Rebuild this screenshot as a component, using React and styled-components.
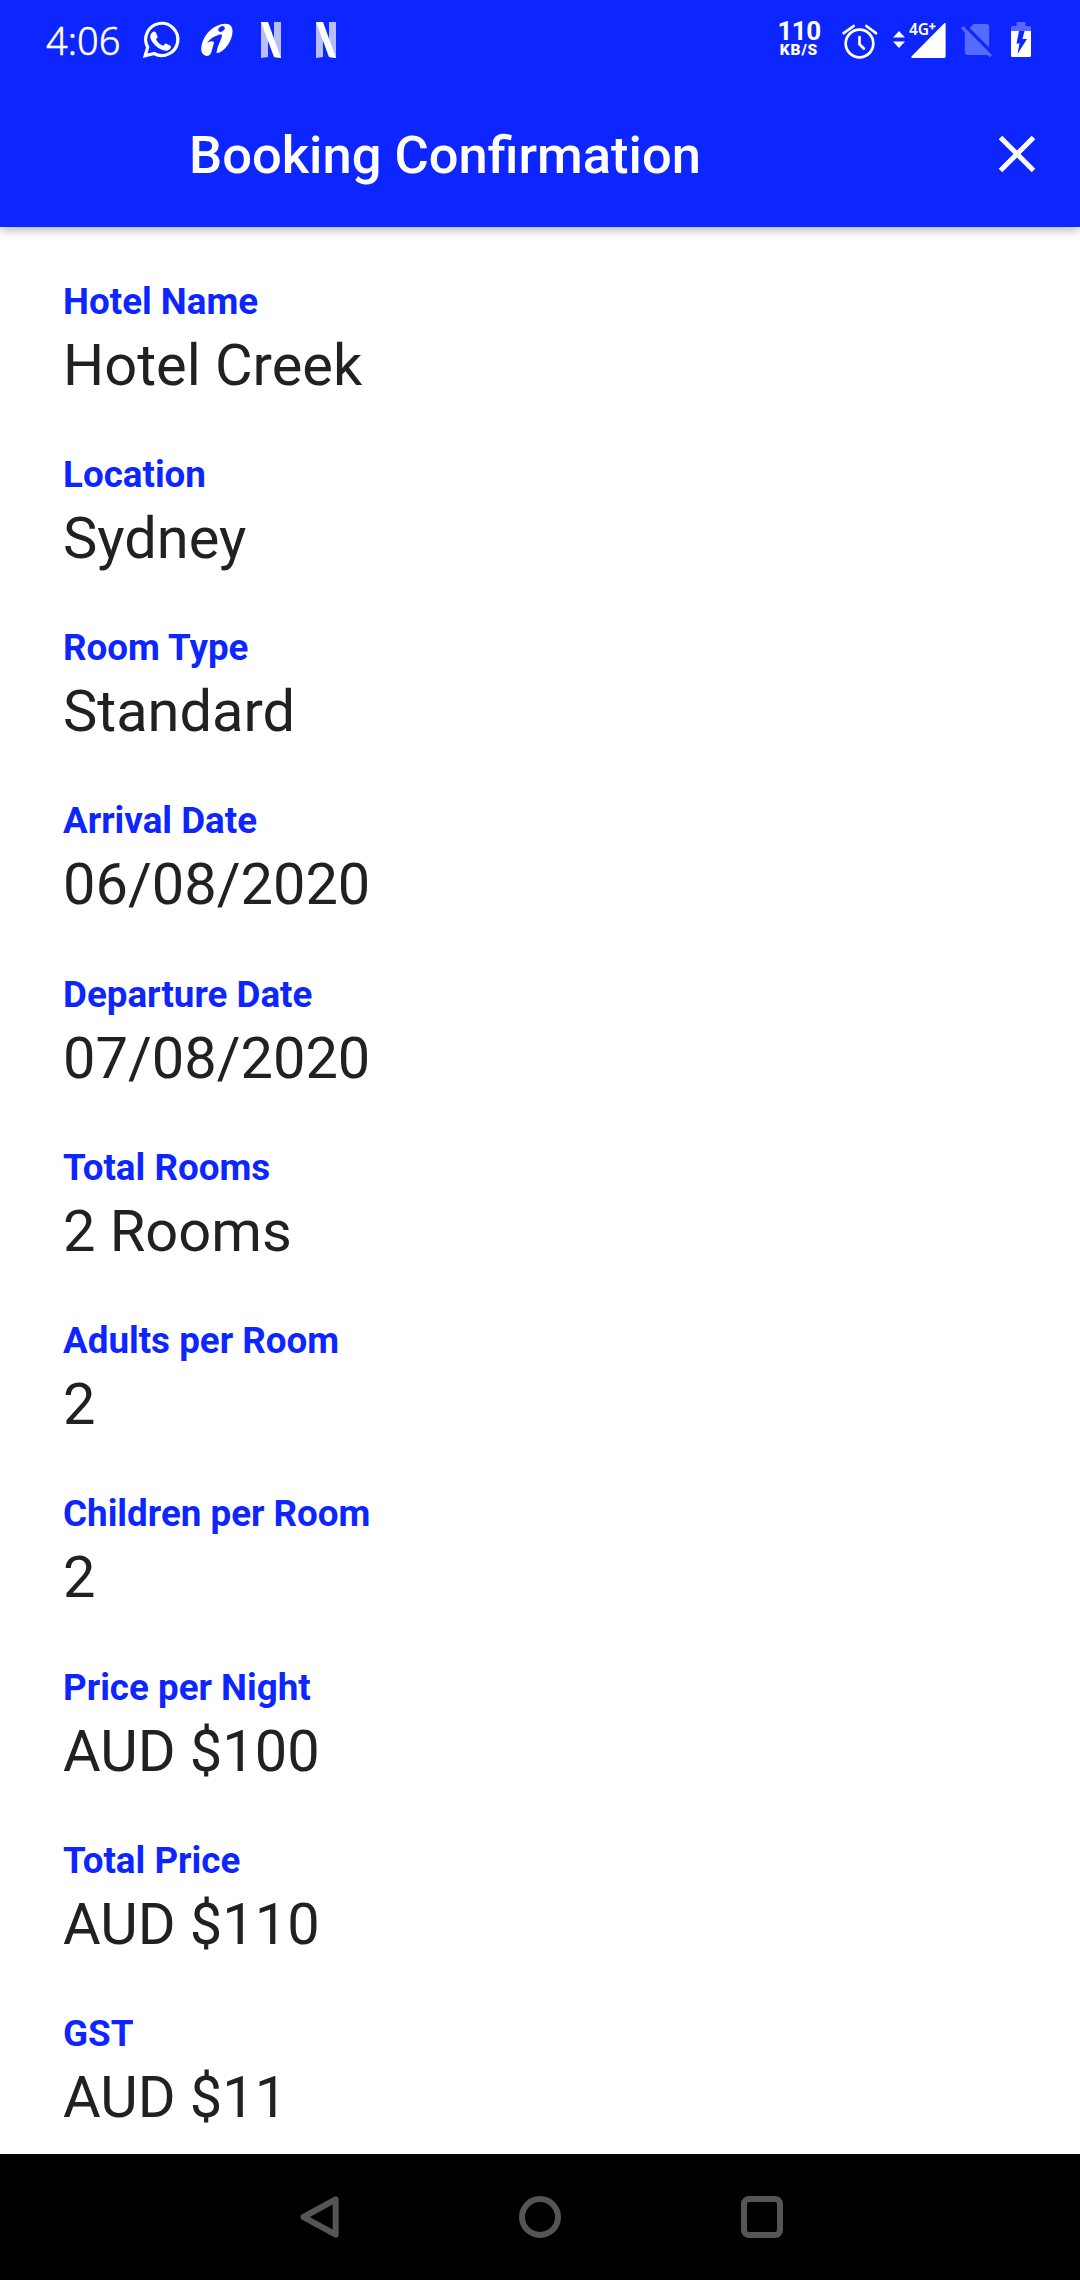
import React from 'react';
import styled, { createGlobalStyle } from 'styled-components';

const BLUE = '#0d26ff';

const GlobalStyle = createGlobalStyle`
  *, *::before, *::after { box-sizing: border-box; }
  body { margin: 0; background: #fff; font-family: Roboto, sans-serif; }
`;

const Screen = styled.div`
  display: flex;
  flex-direction: column;
  width: 1080px;
  height: 2280px;
  overflow: hidden;
  background: #fff;
`;

const Header = styled.header`
  flex: none;
  height: 227px;
  background: ${BLUE};
  color: #fff;
  box-shadow: 0 2px 10px rgba(0, 0, 0, 0.36);
  z-index: 1;
`;

const StatusBar = styled.div`
  display: flex;
  justify-content: space-between;
  height: 80px;
  padding: 0 49px 0 46px;
`;

const StatusGroup = styled.div`
  display: flex;
  align-items: center;
  height: 80px;
`;

const Clock = styled.span`
  width: 96px;
  font: 300 38px/80px 'Noto Sans', sans-serif;
  -webkit-text-stroke: 0.5px #fff;
  white-space: nowrap;
`;

const Icon = styled.svg`
  display: block;
  flex: none;
  width: ${(p) => p.$w}px;
  height: 80px;
  margin-left: ${(p) => p.$gap || 0}px;
  overflow: visible;
`;

const Speed = styled.div`
  display: flex;
  flex-direction: column;
  align-items: center;
  width: 42px;
  margin-top: -3px;
`;

const SpeedValue = styled.span`
  font-size: 26px;
  font-weight: 700;
  line-height: 22px;
  letter-spacing: -0.6px;
`;

const SpeedUnit = styled.span`
  font-size: 15.5px;
  font-weight: 900;
  line-height: 16px;
  letter-spacing: 0.8px;
`;

const Toolbar = styled.div`
  display: flex;
  align-items: center;
  justify-content: space-between;
  height: 147px;
  padding: 0 44px 0 189px;
`;

const Title = styled.h1`
  margin: 0;
  padding-top: 3px;
  font-size: 52.5px;
  font-weight: 500;
  line-height: 62px;
  white-space: nowrap;
`;

const CloseButton = styled.button`
  display: block;
  padding: 0;
  border: 0;
  background: none;
  color: #fff;
`;

const Details = styled.dl`
  flex: 1;
  min-height: 0;
  margin: 0;
  padding: 52.6px 63px 0;
  overflow: hidden;
`;

const Field = styled.div`
  height: 173.25px;
`;

const Label = styled.dt`
  color: ${BLUE};
  font-size: 36.75px;
  font-weight: 700;
  line-height: 44px;
`;

const Value = styled.dd`
  margin: 7px 0 0;
  color: #212121;
  font-size: 57.75px;
  line-height: 68px;
`;

const NavBar = styled.nav`
  display: flex;
  flex: none;
  align-items: center;
  justify-content: space-between;
  height: 126px;
  padding: 0 297px;
  background: #000;
`;

const NavIcon = styled.svg`
  display: block;
  width: 42px;
  height: 42px;
  overflow: visible;
  fill: none;
  stroke: #555;
  stroke-width: 6;
  stroke-linejoin: round;
`;

const IconText = styled.text`
  font: 600 15.5px 'Noto Sans', sans-serif;
  fill: #fff;
`;

const fields = [
  ['Hotel Name', 'Hotel Creek'],
  ['Location', 'Sydney'],
  ['Room Type', 'Standard'],
  ['Arrival Date', '06/08/2020'],
  ['Departure Date', '07/08/2020'],
  ['Total Rooms', '2 Rooms'],
  ['Adults per Room', '2'],
  ['Children per Room', '2'],
  ['Price per Night', 'AUD $100'],
  ['Total Price', 'AUD $110'],
  ['GST', 'AUD $11'],
];

const ChatIcon = () => (
  <Icon $w={37} viewBox="0 0 37 80">
    <path d="M3.2 55.8 5.7 47.2A16.1 16.1 0 1 1 12 53.5Z" fill="none" stroke="#fff" strokeWidth="3.2" />
    <path d="M12.2 31.7c.7-.5 2-.4 2.4.3l2 4.4c.2.6-.1 1.1-1.6 3 2 3.300 4 5 7.300 6.300 1.500-1.800 2-2.400 2.700-2.100l4.500 2.100c1.100.5.2 2.800-.8 3.700-2.600 2.200-6.200 1.400-10.300-.9-4.400-2.500-8-7-9-10.200-.8-2.700.5-5.100 2.800-6.600Z" transform="translate(-1 0)" fill="#fff" />
  </Icon>
);

const BankIcon = () => (
  <Icon $w={32} $gap={22} viewBox="0 0 32 80">
    <path d="M20 24.300C28 22.300 32 25.500 31.500 32 31 40.500 25.500 49 18 52.800L10 53C8.800 55.800 6 56.500 4 55.500 1.200 54 0 52 .2 48.500.7 38.500 9 27 20 24.300Z" fill="#fff" />
    <path d="M6 43C9 38.500 14 35.500 19 34.400 20.800 34.100 21.400 35.400 20.700 37.200L16.800 47 14.800 55H9.500L12.800 43.500C13.500 40.800 10.500 40.600 6 43Z" fill={BLUE} />
    <ellipse cx="20.500" cy="29" rx="3.500" ry="2.500" transform="rotate(-35 20.500 29)" fill={BLUE} />
  </Icon>
);

const LetterIcon = ({ gap }) => (
  <Icon $w={20} $gap={gap} viewBox="0 0 20 80">
    <path d="M0 22h7v35l-7 1ZM13 22h7v36l-7-1Z" fill="#fff" fillOpacity=".7" />
    <path d="M0 22h7l13 36-7-1Z" fill="#fff" />
  </Icon>
);

const AlarmIcon = () => (
  <Icon $w={36} $gap={22} viewBox="0 0 36 80" fill="none" stroke="#fff" strokeWidth="2.700" strokeLinecap="round" strokeLinejoin="round">
    <circle cx="17.500" cy="43.500" r="13.800" />
    <path d="M17.500 37v7.200l4.300 4.300M1.700 33.200l10-7.200M24.300 26l9.700 7.200" />
  </Icon>
);

const SignalIcon = () => (
  <Icon $w={53} $gap={15} viewBox="0 0 53 80" fill="#fff">
    <path d="M6 31l6 6.500H0ZM0 41.500h12l-6 6.500Z" />
    <path d="M19.500 58c-1.200 0-1.500-1-.8-1.800L51 23.500c.8-.8 1.600-.4 1.600.6V56.500q0 1.500-1.500 1.500Z" />
    <IconText x="16" y="35">4G</IconText>
    <path d="M36.200 26.300h6.400M39.400 23v6.600" stroke="#fff" strokeWidth="1.800" />
  </Icon>
);

const NoSimIcon = () => (
  <Icon $w={32} $gap={15} viewBox="0 0 32 80" fill="#566aff">
    <path d="M8.500 28 12.500 24H25.500q2.700 0 2.700 2.700V47.500Z" />
    <path d="M2.200 26 31 55 28.800 57.200 26.500 55H6.500q-2.700 0-2.700-2.700V32.400L0 28.200Z" />
  </Icon>
);

const BatteryIcon = () => (
  <Icon $w={20} $gap={18} viewBox="0 0 20 80">
    <path d="M5.500 22h9v4H18.500q1.500 0 1.500 1.500V31H0v-3.500Q0 26 1.500 26h4Z" fill="#fff" fillOpacity=".3" />
    <path d="M0 31h20v24.500q0 1.500-1.500 1.500h-17Q0 57 0 55.500Z" fill="#fff" />
    <path d="M8 31H13.500L11.500 39H16L6.500 54 8.500 43.500H5.500Z" fill={BLUE} />
  </Icon>
);

export default function App() {
  return (
    <Screen>
      <GlobalStyle />
      <Header>
        <StatusBar>
          <StatusGroup>
            <Clock>4:06</Clock>
            <ChatIcon />
            <BankIcon />
            <LetterIcon gap={28} />
            <LetterIcon gap={35} />
          </StatusGroup>
          <StatusGroup>
            <Speed>
              <SpeedValue>110</SpeedValue>
              <SpeedUnit>KB/S</SpeedUnit>
            </Speed>
            <AlarmIcon />
            <SignalIcon />
            <NoSimIcon />
            <BatteryIcon />
          </StatusGroup>
        </StatusBar>
        <Toolbar>
          <Title>Booking Confirmation</Title>
          <CloseButton aria-label="Close">
            <svg width="38" height="38" viewBox="0 0 38 38" display="block">
              <path d="M2.500 2.500 35.500 35.500M35.500 2.500 2.500 35.500" stroke="currentColor" strokeWidth="5" />
            </svg>
          </CloseButton>
        </Toolbar>
      </Header>
      <Details>
        {fields.map(([label, value]) => (
          <Field key={label}>
            <Label>{label}</Label>
            <Value>{value}</Value>
          </Field>
        ))}
      </Details>
      <NavBar>
        <NavIcon viewBox="0 0 42 42">
          <path d="M38.700 3.300V38.700L6.500 21Z" />
        </NavIcon>
        <NavIcon viewBox="0 0 42 42">
          <circle cx="21" cy="21" r="18" />
        </NavIcon>
        <NavIcon viewBox="0 0 42 42">
          <rect x="3" y="3" width="36" height="36" rx="5" />
        </NavIcon>
      </NavBar>
    </Screen>
  );
}
